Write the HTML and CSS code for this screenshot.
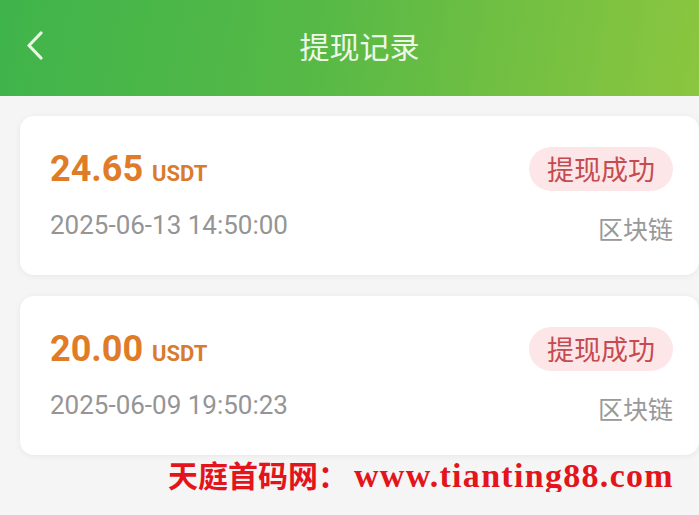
FILE: index.html
```html
<!DOCTYPE html>
<html lang="zh-CN">
<head>
    <meta charset="UTF-8">
    <meta name="viewport" content="width=device-width, initial-scale=1.0">
    <title>提现记录</title>
    <link rel="stylesheet" href="styles.css">
</head>
<body>
    <div id="top-bar">
        <span class="back">
            <svg width="20" height="30" viewBox="0 0 20 30">
                <polyline points="15,3 3,15.5 15,28" fill="none" stroke="#e8f6e2" stroke-width="3.2" stroke-linecap="round" stroke-linejoin="round"/>
            </svg>
        </span>
        <h1>提现记录</h1>
    </div>

    <div id="record-list">
        <div class="record">
            <div class="record-row top">
                <div class="amount">24.65 <span class="unit">USDT</span></div>
                <span class="status">提现成功</span>
            </div>
            <div class="record-row bottom">
                <span class="time">2025-06-13 14:50:00</span>
                <span class="channel">区块链</span>
            </div>
        </div>
        <div class="record">
            <div class="record-row top">
                <div class="amount">20.00 <span class="unit">USDT</span></div>
                <span class="status">提现成功</span>
            </div>
            <div class="record-row bottom">
                <span class="time">2025-06-09 19:50:23</span>
                <span class="channel">区块链</span>
            </div>
        </div>
    </div>

    <div id="site-mark">天庭首码网：<span class="site-url">www.tianting88.com</span></div>
</body>
</html>
```

FILE: styles.css
```css
body {
    margin: 0;
    background-color: #f5f5f5;
    font-family: Roboto, "Noto Sans CJK SC", sans-serif;
    overflow: hidden;
}
#top-bar {
    height: 96px;
    box-sizing: border-box;
    display: flex;
    align-items: center;
    justify-content: center;
    position: relative;
    padding: 0 0 6px 20px;
    background: linear-gradient(100deg, #3fb44b 0%, #56b946 45%, #74c042 75%, #8bc63f 100%);
}
#top-bar h1 {
    margin: 0;
    font-size: 30px;
    font-weight: normal;
    line-height: 40px;
    color: #eef8e9;
    font-family: "Noto Sans CJK SC", sans-serif;
}
.back {
    position: absolute;
    left: 26px;
    top: 30px;
    display: flex;
}
#record-list {
    padding: 20px 0 0 20px;
    display: flex;
    flex-direction: column;
    gap: 21px;
}
.record {
    background-color: white;
    border-radius: 14px;
    box-shadow: 0 1px 6px rgba(0,0,0,0.06);
    padding: 30px 26px 33px 30px;
    display: flex;
    flex-direction: column;
    gap: 16px;
}
.record-row {
    display: flex;
    justify-content: space-between;
    align-items: center;
}
.record-row.top {
    height: 46px;
}
.record-row.bottom {
    height: 34px;
}
.amount {
    font-size: 36px;
    font-weight: bold;
    color: #e07b27;
    line-height: 44px;
    white-space: nowrap;
}
.unit {
    font-size: 22px;
    line-height: 1;
    color: #d97b2d;
}
.status {
    background-color: #fde6e8;
    color: #c54b50;
    font-size: 27px;
    line-height: 44px;
    padding: 0 18px;
    border-radius: 22px;
    font-family: "Noto Sans CJK SC", sans-serif;
}
.time {
    font-size: 26px;
    color: #959595;
    line-height: 34px;
}
.channel {
    font-size: 25px;
    color: #999;
    line-height: 30px;
    padding-top: 5px;
    font-family: "Noto Sans CJK SC", sans-serif;
}
#site-mark {
    margin: 3px 0 0 168px;
    font-family: "Noto Sans CJK SC", sans-serif;
    font-size: 30px;
    font-weight: bold;
    color: #e3141b;
    line-height: 32px;
    white-space: nowrap;
}
.site-url {
    font-family: "Liberation Serif", serif;
    font-size: 34px;
    letter-spacing: 1.3px;
    margin-left: 6px;
}
```
